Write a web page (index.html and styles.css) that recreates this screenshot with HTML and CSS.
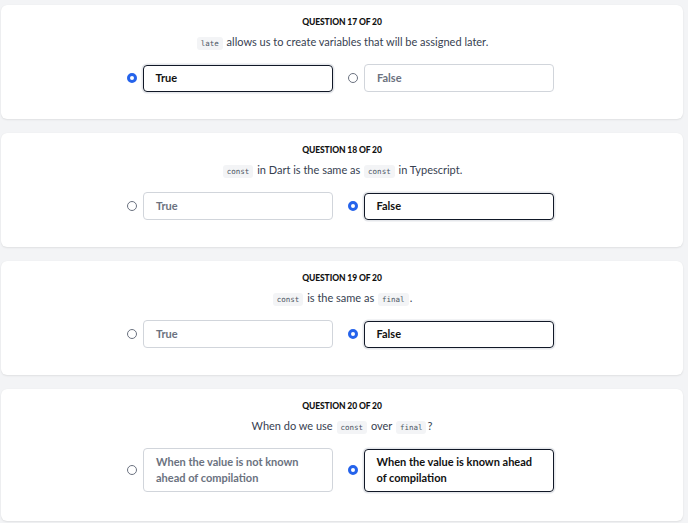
FILE: index.html
```html
<!DOCTYPE html>
<html lang="en">
<head>
<meta charset="utf-8">
<title>Quiz</title>
<link rel="stylesheet" href="styles.css">
</head>
<body>
<main class="quiz">
  <section class="card">
    <h2 class="qnum">Question 17 of 20</h2>
    <p class="qtext"><code>late</code> allows us to create variables that will be assigned later.</p>
    <div class="options">
      <label class="option selected"><span class="radio"></span><span class="box">True</span></label>
      <label class="option"><span class="radio"></span><span class="box">False</span></label>
    </div>
  </section>
  <section class="card">
    <h2 class="qnum">Question 18 of 20</h2>
    <p class="qtext"><code>const</code> in Dart is the same as <code>const</code> in Typescript.</p>
    <div class="options">
      <label class="option"><span class="radio"></span><span class="box">True</span></label>
      <label class="option selected"><span class="radio"></span><span class="box">False</span></label>
    </div>
  </section>
  <section class="card">
    <h2 class="qnum">Question 19 of 20</h2>
    <p class="qtext"><code>const</code> is the same as <code>final</code>.</p>
    <div class="options">
      <label class="option"><span class="radio"></span><span class="box">True</span></label>
      <label class="option selected"><span class="radio"></span><span class="box">False</span></label>
    </div>
  </section>
  <section class="card card-last">
    <h2 class="qnum">Question 20 of 20</h2>
    <p class="qtext">When do we use <code>const</code> over <code>final</code>?</p>
    <div class="options">
      <label class="option"><span class="radio"></span><span class="box">When the value is not known ahead of compilation</span></label>
      <label class="option selected"><span class="radio"></span><span class="box">When the value is known ahead of compilation</span></label>
    </div>
  </section>
</main>
</body>
</html>
```

FILE: styles.css
```css
html, body {
  margin: 0;
  padding: 0;
  background: #f3f4f6;
  font-family: Lato, "Noto Sans", sans-serif;
}

.quiz {
  display: flex;
  flex-direction: column;
  gap: 14px;
  padding: 5px 5px 3px 1px;
}

.card {
  background: #ffffff;
  border-radius: 6px;
  box-shadow: 0 1px 2px rgba(0, 0, 0, 0.08), 0 0 1px rgba(0, 0, 0, 0.06);
  padding: 11px 0 27px;
  display: flex;
  flex-direction: column;
  align-items: center;
}

.card-last {
  padding-bottom: 29px;
}

.qnum {
  margin: 0;
  font-size: 8.5px;
  line-height: 12px;
  height: 12px;
  font-weight: 900;
  text-transform: uppercase;
  color: #111111;
  letter-spacing: -0.1px;
}

.qtext {
  margin: 7px 0 0;
  font-size: 11px;
  line-height: 14px;
  height: 14px;
  color: #374151;
}

.qtext code {
  font-family: "DejaVu Sans Mono", "Liberation Mono", monospace;
  font-size: 7.5px;
  line-height: 8px;
  background: #f3f4f6;
  color: #4b5563;
  padding: 2px 4px;
  border-radius: 3px;
  margin: 0 1px;
}

.options {
  margin: 15px 3px 0 0;
  display: flex;
  gap: 15px;
}

.option {
  display: flex;
  align-items: center;
  gap: 6px;
}

.radio {
  width: 10px;
  height: 10px;
  box-sizing: border-box;
  border-radius: 50%;
  border: 1px solid #6b7280;
  background: #ffffff;
  flex: none;
}

.option.selected .radio {
  border: 3px solid #2563eb;
  background: #ffffff;
}

.box {
  width: 190px;
  box-sizing: border-box;
  border: 1px solid #d1d5db;
  border-radius: 4px;
  padding: 5px 12px;
  font-size: 11px;
  line-height: 16px;
  font-weight: 700;
  color: #6b7280;
}

.option.selected .box {
  border: 1.5px solid #111827;
  box-shadow: 0 0 0 1.5px #e5e7eb;
  color: #111111;
  padding: 4.5px 11.5px;
}
```
